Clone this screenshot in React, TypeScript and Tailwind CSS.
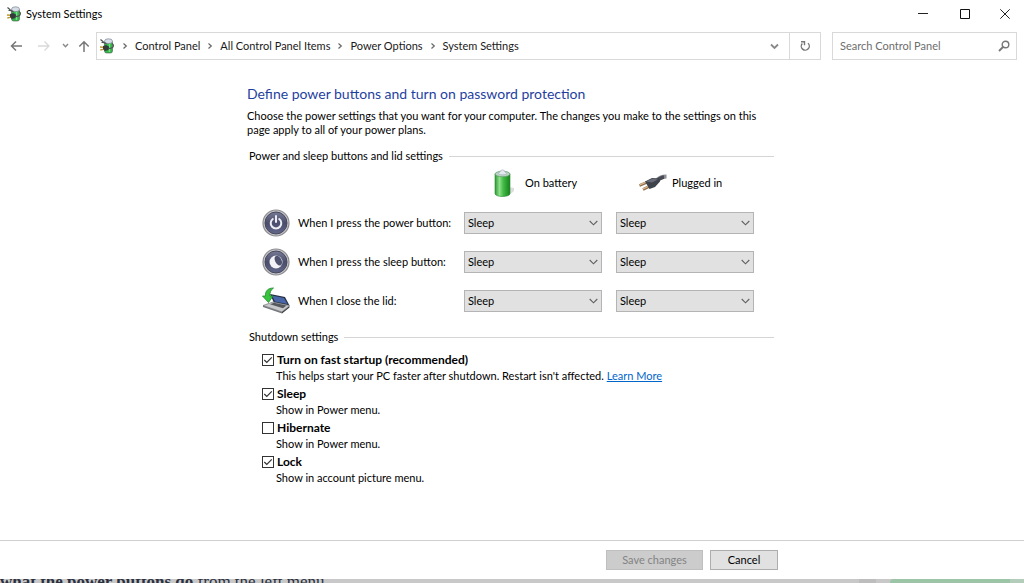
import { useState } from "react";
import type { ReactNode } from "react";

const actions = ["Do nothing", "Sleep", "Hibernate", "Shut down"];

const breadcrumbs = ["Control Panel", "All Control Panel Items", "Power Options", "System Settings"];

export default function App() {
  return (
    <div className="min-h-screen flex flex-col bg-white font-[Lato,'Open_Sans',sans-serif] text-[11px] leading-[14px] text-black">
      <TitleBar />
      <NavBar />

      <main className="flex-1 mx-auto w-full max-w-[530px] pt-6 pr-[3px]">
        <h1 className="text-[14px] leading-5 text-[#1f3f9f]">
          Define power buttons and turn on password protection
        </h1>
        <p className="mt-[5px]">
          Choose the power settings that you want for your computer. The changes you make to the settings on this
          page apply to all of your power plans.
        </p>

        <GroupTitle className="mt-3">Power and sleep buttons and lid settings</GroupTitle>
        <div className="pl-[15px]">
          <div className="grid grid-cols-[188px_138px_138px] gap-x-[14px] h-10 items-center">
            <div />
            <div className="flex items-center gap-[10px] pl-[29px]">
              <BatteryIcon />
              On battery
            </div>
            <div className="flex items-center gap-1 pl-[22px]">
              <PlugIcon />
              Plugged in
            </div>
          </div>
          <SettingRow icon={<PowerIcon />} label="When I press the power button:" />
          <SettingRow icon={<MoonIcon />} label="When I press the sleep button:" />
          <SettingRow icon={<LidIcon />} label="When I close the lid:" />
        </div>

        <GroupTitle className="mt-[10px]">Shutdown settings</GroupTitle>
        <div className="pl-[15px] pt-[7px]">
          <ShutdownOption id="fast-startup" label="Turn on fast startup (recommended)" initial>
            This helps start your PC faster after shutdown. Restart isn't affected.{" "}
            <a href="#" className="text-[#0066cc] underline">Learn More</a>
          </ShutdownOption>
          <ShutdownOption id="sleep" label="Sleep" initial>Show in Power menu.</ShutdownOption>
          <ShutdownOption id="hibernate" label="Hibernate">Show in Power menu.</ShutdownOption>
          <ShutdownOption id="lock" label="Lock" initial>Show in account picture menu.</ShutdownOption>
        </div>
      </main>

      <footer className="border-t border-[#cfcfcf]">
        <div className="mx-auto w-full max-w-[532px] flex justify-end gap-[7px] py-[9px]">
          <button disabled className="h-5 w-[97px] border border-[#bfbfbf] bg-[#cccccc] text-[#838383]">
            Save changes
          </button>
          <button className="h-5 w-[68px] border border-[#adadad] bg-[#e1e1e1]">Cancel</button>
        </div>
      </footer>

      {/* Page behind the window */}
      <div className="relative h-1 overflow-hidden bg-[#c8c8c8]">
        <div className="absolute left-0 top-[-7px] whitespace-nowrap font-['Liberation_Serif',serif] text-[17px] leading-5 text-[#2b3040]">
          <b>what the power buttons do</b> from the left menu.
        </div>
        <div className="absolute right-[148px] top-0 h-1 w-[17px] bg-[#bdbdbd]" />
        <div className="absolute right-[14px] top-0 h-1 w-[120px] rounded-tl bg-[#9cc5a7]" />
        <div className="absolute right-0 top-0 h-1 w-[14px] bg-[#b4ccba]" />
      </div>
    </div>
  );
}

function TitleBar() {
  return (
    <header className="flex h-7 items-center pl-[6px]">
      <PowerOptionsIcon />
      <span className="ml-1">System Settings</span>
      <div className="ml-auto flex h-full">
        <button aria-label="Minimize" className="flex w-[42px] items-center justify-center">
          <svg width="10" height="10" stroke="#222" fill="none"><path d="M0 4.500h10" /></svg>
        </button>
        <button aria-label="Maximize" className="flex w-[42px] items-center justify-center">
          <svg width="10" height="10" stroke="#111" fill="none"><path d="M.5.5h9v9h-9z" /></svg>
        </button>
        <button aria-label="Close" className="flex w-[38px] items-center justify-center">
          <svg width="10" height="10" stroke="#222" fill="none"><path d="M.3.3l9.4 9.4M9.7.3L.3 9.7" /></svg>
        </button>
      </div>
    </header>
  );
}

function NavBar() {
  return (
    <nav className="flex items-center pt-1 pr-[7px] pl-[10px] text-[#1a1a1a]">
      <div className="flex w-[86px] shrink-0 items-center">
        <button aria-label="Back">
          <svg width="13" height="12" fill="none" stroke="#777" strokeWidth="1.5"><path d="M12 6H1.5M6 1.5L1.5 6 6 10.5" /></svg>
        </button>
        <button aria-label="Forward" className="ml-[15px]" disabled>
          <svg width="13" height="12" fill="none" stroke="#d9d9d9" strokeWidth="1.3"><path d="M0 6h11M6.500 1.500L11 6l-4.500 4.500" /></svg>
        </button>
        <button aria-label="Recent locations" className="ml-[11px]">
          <svg width="7" height="6" fill="none" stroke="#888" strokeWidth="1.4"><path d="M1 1l2.500 2.700L6 1" /></svg>
        </button>
        <button aria-label="Up" className="ml-[9px]">
          <svg width="12" height="13" fill="none" stroke="#777" strokeWidth="1.5"><path d="M6 12V2M1.300 6.500L6 1.800l4.700 4.700" /></svg>
        </button>
      </div>

      <div className="flex h-7 flex-1 items-center border border-[#d9d9d9] pl-[2px]">
        <PowerOptionsIcon />
        {breadcrumbs.map((crumb) => (
          <div key={crumb} className="flex items-center">
            <svg className="mx-[7px]" width="6" height="8" fill="none" stroke="#666" strokeWidth="1.2"><path d="M1.500 1.500L4.300 4 1.500 6.500" /></svg>
            <button className="whitespace-nowrap">{crumb}</button>
          </div>
        ))}
        <button aria-label="Previous locations" className="ml-auto flex h-full w-[29px] items-center justify-center">
          <svg width="9" height="7" fill="none" stroke="#888" strokeWidth="1.8"><path d="M1 1.500l3.500 3.500L8 1.500" /></svg>
        </button>
        <button aria-label="Refresh" className="flex h-full w-[31px] items-center justify-center border-l border-[#d9d9d9]">
          <svg width="11" height="12" fill="none" stroke="#777" strokeWidth="1.4">
            <path d="M2.300 3.500A4 4 0 1 0 8 3.200M1 1.700h3.500v3.500" />
          </svg>
        </button>
      </div>

      <div className="ml-[11px] flex h-7 w-[185px] items-center border border-[#d9d9d9] pr-[6px] pl-[7px]">
        <input
          type="search"
          aria-label="Search Control Panel"
          placeholder="Search Control Panel"
          className="min-w-0 flex-1 outline-none placeholder:text-[#6d6d6d]"
        />
        <svg width="12" height="12" fill="none" stroke="#777" strokeWidth="1.400">
          <circle cx="7.500" cy="4.500" r="3.300" />
          <path d="M5 7L1 11" strokeWidth="1.800" />
        </svg>
      </div>
    </nav>
  );
}

function GroupTitle({ children, className }: { children: ReactNode; className: string }) {
  return (
    <div className={`flex items-center gap-[6px] pl-[2px] ${className}`}>
      <h2>{children}</h2>
      <div className="h-px flex-1 bg-[#d5d5d5]" />
    </div>
  );
}

function SettingRow({ icon, label }: { icon: ReactNode; label: string }) {
  return (
    <div className="grid grid-cols-[188px_138px_138px] gap-x-[14px] h-[39px] items-center">
      <div className="flex items-center gap-2 whitespace-nowrap">
        {icon}
        {label}
      </div>
      <ActionSelect label={`${label} On battery`} />
      <ActionSelect label={`${label} Plugged in`} />
    </div>
  );
}

function ActionSelect({ label }: { label: string }) {
  return (
    <div className="relative">
      <select
        aria-label={label}
        defaultValue="Sleep"
        className="h-[22px] w-full appearance-none border border-[#b4b4b4] bg-[#e1e1e1] pl-[3px]"
      >
        {actions.map((a) => (
          <option key={a}>{a}</option>
        ))}
      </select>
      <svg className="pointer-events-none absolute top-2 right-1" width="9" height="7" fill="none" stroke="#606060" strokeWidth="1.100">
        <path d="M.700 1l3.800 3.800L8.300 1" />
      </svg>
    </div>
  );
}

interface ShutdownOptionProps {
  id: string;
  label: string;
  initial?: boolean;
  children: ReactNode;
}

function ShutdownOption({ id, label, initial = false, children }: ShutdownOptionProps) {
  const [checked, setChecked] = useState(initial);

  return (
    <div className="h-[34px]">
      <div className="flex h-[18px] items-center gap-[3px]">
        <span className="relative flex">
          <input
            id={id}
            type="checkbox"
            checked={checked}
            onChange={(e) => setChecked(e.target.checked)}
            className="size-3 appearance-none border border-[#333] bg-white"
          />
          {checked && (
            <svg className="pointer-events-none absolute inset-0" width="12" height="12" fill="none" stroke="#333" strokeWidth="1.200">
              <path d="M2.300 6l2.500 2.500 5-5.200" />
            </svg>
          )}
        </span>
        <label htmlFor={id} className="text-[12px] font-bold">{label}</label>
      </div>
      <p className="pl-[14px] whitespace-nowrap">{children}</p>
    </div>
  );
}

/* Green battery with a plug wrapped round it */
function PowerOptionsIcon() {
  return (
    <svg width="16" height="16" viewBox="0 0 15 16" fill="none" className="shrink-0">
      <rect x="5" y="2.500" width="8" height="12.500" rx="2" fill="#35b44a" stroke="#47614b" strokeWidth=".6" />
      <path d="M10 6v8" stroke="#72e083" strokeWidth="1.500" />
      <ellipse cx="9" cy="3.200" rx="4" ry="2.400" fill="#d7dde8" stroke="#7d8592" strokeWidth=".7" />
      <path d="M1 1.500l3 2.500M2 4.500c2.500-.500 4 1 5 1.500M12.500 5.500c2 1 2 3.500-.500 4.500-1 .500-2 .500-3 .500" stroke="#4b5150" strokeWidth="1.200" />
      <path d="M3.500 8l3-1 3 1.500-.500 3.500-3.500 1-2-1.500z" fill="#343b3c" />
      <path d="M.500 9l3 .200M.800 12l3-.600" stroke="#c19a2b" strokeWidth="1.400" />
    </svg>
  );
}

function BatteryIcon() {
  return (
    <svg width="22" height="30" viewBox="0 0 22 30" fill="none" className="shrink-0">
      <defs>
        <linearGradient id="battery-body" x1="0" x2="1">
          <stop offset="0" stopColor="#2c9a31" />
          <stop offset=".3" stopColor="#8fe08c" />
          <stop offset=".55" stopColor="#43bb45" />
          <stop offset="1" stopColor="#16821d" />
        </linearGradient>
      </defs>
      <path d="M15 28l6-5v-3l-5-1z" fill="#777" opacity=".25" />
      <path d="M2 6v19.500c0 4 15 4 15 0V6z" fill="url(#battery-body)" stroke="#278b2d" strokeWidth=".6" />
      <ellipse cx="9.500" cy="6" rx="7.500" ry="2.800" fill="#b9d3c1" stroke="#5b9a67" strokeWidth=".7" />
      <path d="M5.500 5.500c0-1 2-1 2-2.500s4-1.500 4 0 2 1.500 2 2.500c0 1.700-8 1.700-8 0z" fill="#e4e8f1" stroke="#a5adba" strokeWidth=".6" />
    </svg>
  );
}

function PlugIcon() {
  return (
    <svg width="30" height="20" viewBox="0 0 30 20" fill="none" className="shrink-0">
      <path d="M18 8c4-4 6-4.500 10.500-4.500" stroke="#8b8e94" strokeWidth="4" />
      <path d="M18 9c3-3.500 5-4.500 8-5" stroke="#484b53" strokeWidth="3.500" />
      <path d="M1.500 12.500l7-3M5 16.500l7-3.500" stroke="#8c6b49" strokeWidth="2.600" />
      <path d="M1.500 12l7-3M5 16l7-3.500" stroke="#e1bd91" strokeWidth="1.300" />
      <path d="M7 8.500L14 5l7 .500 1 3-5 5.500-5.500 2z" fill="#3e424b" />
      <path d="M8 8.500l6-2.800 6 .800-6 3z" fill="#686d78" />
    </svg>
  );
}

function RoundButton({ children }: { children: ReactNode }) {
  return (
    <svg width="28" height="28" viewBox="0 0 28 28" fill="none" className="shrink-0">
      <defs>
        <linearGradient id="round-face" x1="0" y1="0" x2="0" y2="1">
          <stop offset="0" stopColor="#777b95" />
          <stop offset=".5" stopColor="#4a4d6c" />
          <stop offset="1" stopColor="#63678a" />
        </linearGradient>
      </defs>
      <circle cx="14" cy="14" r="13" fill="#c5c5c9" stroke="#8d8d91" strokeWidth="1.200" />
      <circle cx="14" cy="14" r="11" fill="url(#round-face)" stroke="#46485a" />
      {children}
    </svg>
  );
}

function PowerIcon() {
  return (
    <RoundButton>
      <path d="M10.800 10a5.300 5.300 0 1 0 6.400 0" stroke="#eeeef4" strokeWidth="2" strokeLinecap="round" />
      <path d="M14 7v6" stroke="#eeeef4" strokeWidth="2" strokeLinecap="round" />
    </RoundButton>
  );
}

function MoonIcon() {
  return (
    <RoundButton>
      <circle cx="14" cy="14" r="6.500" fill="#f2f2f6" />
      <ellipse cx="16.300" cy="12.600" rx="3.200" ry="5.300" transform="rotate(-28 16.300 12.600)" fill="#50536f" />
    </RoundButton>
  );
}

function LidIcon() {
  return (
    <svg width="28" height="28" viewBox="0 0 28 28" fill="none" className="shrink-0">
      <path d="M8 7l15 3 4.500 8.500L12 16z" fill="#252d42" />
      <path d="M10 8.500l12 2.500 3.500 6L13 14.500z" fill="#4967a8" />
      <path d="M1 18.500L11 15l16.500 3.500L20 25z" fill="#c6c8ca" stroke="#77797c" strokeWidth=".7" />
      <path d="M1 18.500l19 6.500v1.500L1 20z" fill="#74777b" />
      <path d="M20 25l7.500-6v1.500L20 26.500z" fill="#393c41" />
      <path d="M8 17.300l4-1.500 12.500 2.700-3.500 2.700z" fill="#55585c" />
      <path d="M11.500 1C6 1 3 4 3.500 9H.500l6 6.500 4.500-6.500H8c-.500-3.500 1-6.500 3.500-8z" fill="#39c43e" stroke="#1c8b28" strokeWidth=".8" />
    </svg>
  );
}
